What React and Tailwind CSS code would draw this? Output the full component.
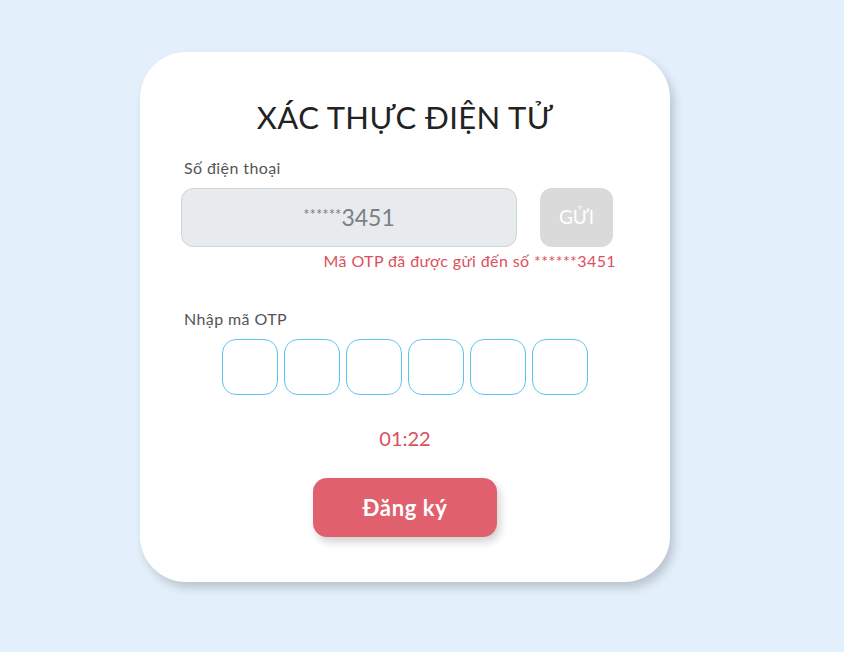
import React from 'react';

const OTP_COUNT = 6;

export default function App() {
  return (
    <div
      className="w-full h-[652px] bg-[#e3f0fc] pt-[52px] pl-[140px]"
      style={{ fontFamily: 'Lato, "Noto Sans", sans-serif' }}
    >
      <div className="w-[530px] h-[530px] bg-white rounded-[46px] shadow-[4px_6px_10px_rgba(0,0,0,0.18)] flex flex-col">
        <h1 className="mt-[43px] text-center text-[31px] leading-[44px] text-[#222] tracking-[0.4px]">
          XÁC THỰC ĐIỆN TỬ
        </h1>

        <label className="mt-[19px] ml-[44px] text-[16px] leading-[20px] text-[#555] tracking-[0.4px]">Số điện thoại</label>

        <div className="mt-[10px] ml-[41px] flex items-center gap-[23px]">
          <div className="w-[336px] h-[59px] rounded-[12px] bg-[#e8ebee] border border-[#cfd4d8] flex items-center justify-center text-[23px] text-[#7a7f85]">
            <span className="text-[15px] mt-[-6px]">******</span>
            <span>3451</span>
          </div>
          <button className="w-[73px] h-[59px] rounded-[12px] bg-[#dadada] text-white text-[19px]">GỬI</button>
        </div>

        <p className="mt-[4px] mr-[54px] text-right text-[16px] leading-[20px] text-[#dd4f5c] tracking-[0.4px]">
          Mã OTP đã được gửi đến số ******3451
        </p>

        <label className="mt-[38px] ml-[44px] text-[16px] leading-[20px] text-[#555] tracking-[0.4px]">Nhập mã OTP</label>

        <div className="mt-[10px] flex justify-center gap-[6px]">
          {Array.from({ length: OTP_COUNT }).map((_, i) => (
            <input
              key={i}
              maxLength={1}
              className="w-[56px] h-[56px] rounded-[14px] border border-[#5ac6ee] outline-none text-center text-[22px]"
            />
          ))}
        </div>

        <div className="mt-[30px] text-center text-[20px] leading-[26px] text-[#d9505c]">01:22</div>

        <div className="mt-[27px] flex justify-center">
          <button className="w-[184px] h-[59px] rounded-[14px] bg-[#e0606e] text-white font-bold text-[22px] tracking-[0.6px] shadow-[3px_5px_8px_rgba(0,0,0,0.18)]">
            Đăng ký
          </button>
        </div>
      </div>
    </div>
  );
}
